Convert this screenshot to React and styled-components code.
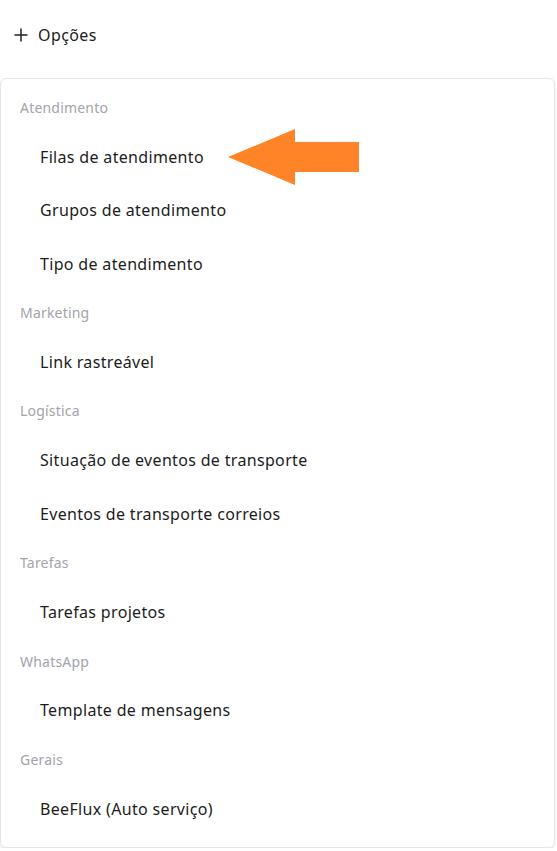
import styled, { createGlobalStyle } from "styled-components";

const sections = [
  { title: "Atendimento", items: ["Filas de atendimento", "Grupos de atendimento", "Tipo de atendimento"] },
  { title: "Marketing", items: ["Link rastreável"] },
  { title: "Logística", items: ["Situação de eventos de transporte", "Eventos de transporte correios"] },
  { title: "Tarefas", items: ["Tarefas projetos"] },
  { title: "WhatsApp", items: ["Template de mensagens"] },
  { title: "Gerais", items: ["BeeFlux (Auto serviço)"] },
];

export default function App() {
  return (
    <>
      <GlobalStyle />
      <Page>
        <OptionsButton>
          <svg width="14" height="14" viewBox="0 0 14 14">
            <path d="M7 0.5v13M0.5 7h13" stroke="#222" strokeWidth="1.5" />
          </svg>
          Opções
        </OptionsButton>
        <Card>
          {sections.map((section) => (
            <Section key={section.title}>
              <SectionTitle>{section.title}</SectionTitle>
              {section.items.map((item, i) => (
                <Item key={item}>
                  {item}
                  {section.title === "Atendimento" && i === 0 && (
                    <Arrow width="132" height="58" viewBox="0 0 132 58">
                      <path d="M0 29 L67 1 L67 14 L131 14 L131 44 L67 44 L67 57 Z" fill="#ff8427" />
                    </Arrow>
                  )}
                </Item>
              ))}
            </Section>
          ))}
        </Card>
      </Page>
    </>
  );
}

const GlobalStyle = createGlobalStyle`
  body {
    margin: 0;
    background: #fff;
    font-family: "Noto Sans", "Open Sans", sans-serif;
    color: #1c1c1c;
  }
`;

const Page = styled.div`
  width: 557px;
  padding-top: 22px;
`;

const OptionsButton = styled.div`
  display: flex;
  align-items: center;
  gap: 10px;
  height: 26px;
  padding-left: 14px;
  font-size: 16px;
  letter-spacing: 0.4px;
  color: #1c1c1c;
`;

const Card = styled.div`
  margin-top: 30px;
  width: 555px;
  box-sizing: border-box;
  border: 1px solid #e6e6e6;
  border-radius: 6px;
  box-shadow: 0 1px 2px rgba(0, 0, 0, 0.12);
  padding: 6px 0 12px;
`;

const Section = styled.div`
  display: flex;
  flex-direction: column;
`;

const SectionTitle = styled.div`
  height: 44.8px;
  display: flex;
  align-items: center;
  padding-left: 19px;
  font-size: 14px;
  letter-spacing: 0.2px;
  color: #a3a3ab;
`;

const Item = styled.div`
  position: relative;
  height: 53.5px;
  display: flex;
  align-items: center;
  padding-left: 39px;
  font-size: 16px;
  letter-spacing: 0.33px;
  color: #1c1c1c;
`;

const Arrow = styled.svg`
  position: absolute;
  left: 227px;
  top: -2px;
`;
